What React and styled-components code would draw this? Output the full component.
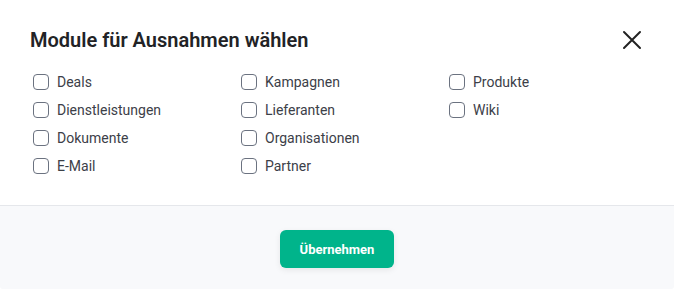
import React from 'react';
import styled, {createGlobalStyle} from 'styled-components';

const GlobalStyle = createGlobalStyle`
    html, body {
        margin:0;
        padding:0;
        background:#ffffff;
    }
    * {
        box-sizing:border-box;
    }
`

const Modal = styled.div`
    display:flex;
    flex-direction:column;
    width:674px;
    height:289px;
    background-color:white;
    border-radius:3px;
    overflow:hidden;
    font-family:Roboto, "Liberation Sans", sans-serif;
`

const Body = styled.div`
    display:flex;
    flex-direction:column;
    padding:26px 30px 24px 33px;
    flex:1;
`

const Header = styled.div`
    display:flex;
    justify-content:space-between;
    align-items:center;
    height:28px;
    margin-left:-3px;
`

const Title = styled.h2`
    margin:0;
    font-size:20px;
    line-height:28px;
    font-weight:600;
    color:#222326;
`

const CloseButton = styled.button`
    display:flex;
    align-items:center;
    justify-content:center;
    width:24px;
    height:24px;
    padding:0;
    border:none;
    background:none;
    cursor:pointer;
    color:#222;
`

const OptionGrid = styled.div`
    display:grid;
    grid-template-columns:repeat(3, 208px);
    grid-auto-flow:column;
    grid-template-rows:repeat(4, 28px);
    margin-top:14px;
`

const Option = styled.label`
    display:flex;
    align-items:center;
    gap:8px;
    font-size:14px;
    color:#3c4048;
    cursor:pointer;
`

const Box = styled.span`
    width:16px;
    height:16px;
    border:1.5px solid #6b7280;
    border-radius:4px;
    background:white;
    flex-shrink:0;
`

const Footer = styled.div`
    display:flex;
    justify-content:center;
    align-items:flex-start;
    height:84px;
    padding-top:24px;
    border-top:1px solid #e5e7eb;
    background-color:#f8f9fb;
`

const SubmitButton = styled.button`
    width:114px;
    height:38px;
    border:none;
    border-radius:6px;
    background-color:#00b48b;
    color:white;
    font-family:Roboto, "Liberation Sans", sans-serif;
    font-weight:700;
    font-size:13px;
    box-shadow:0 2px 6px rgba(0,0,0,0.08);
    cursor:pointer;
`

const modules = [
    'Deals', 'Dienstleistungen', 'Dokumente', 'E-Mail',
    'Kampagnen', 'Lieferanten', 'Organisationen', 'Partner',
    'Produkte', 'Wiki',
];

const CloseIcon = () => (
    <svg width="20" height="20" viewBox="0 0 20 20" fill="none" stroke="currentColor" strokeWidth="2" strokeLinecap="round">
        <path d="M2 2L18 18M18 2L2 18"/>
    </svg>
)

const App = () => {
    return (
        <>
            <GlobalStyle/>
            <Modal>
                <Body>
                    <Header>
                        <Title>Module für Ausnahmen wählen</Title>
                        <CloseButton aria-label="Schließen"><CloseIcon/></CloseButton>
                    </Header>
                    <OptionGrid>
                        {modules.map(name => (
                            <Option key={name}>
                                <Box/>
                                {name}
                            </Option>
                        ))}
                    </OptionGrid>
                </Body>
                <Footer>
                    <SubmitButton>Übernehmen</SubmitButton>
                </Footer>
            </Modal>
        </>
    )
}

export default App;
